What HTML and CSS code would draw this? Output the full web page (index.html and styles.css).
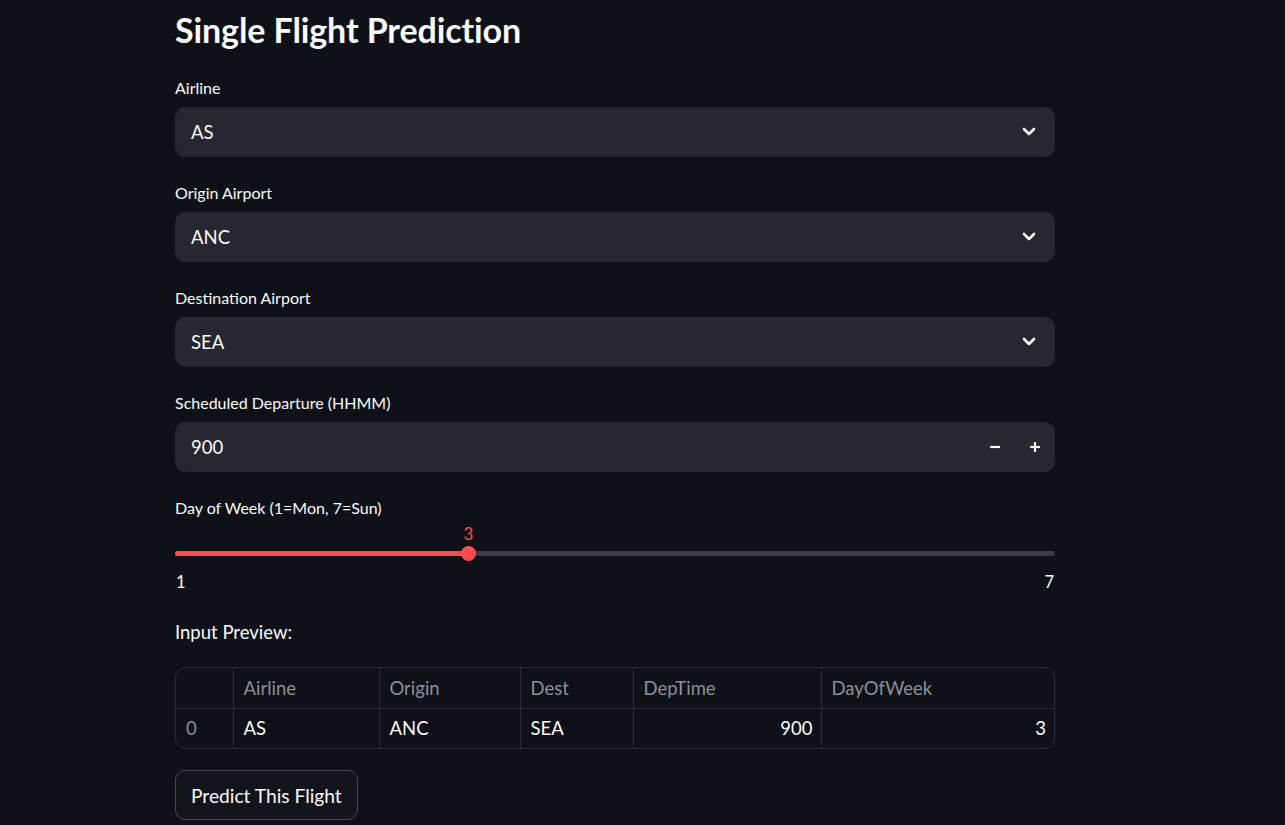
FILE: index.html
```html
<!DOCTYPE html>
<html lang="en">
<head>
<meta charset="utf-8">
<title>Single Flight Prediction</title>
<link rel="stylesheet" href="styles.css">
</head>
<body>
<main class="main">
  <h2 class="title">Single Flight Prediction</h2>

  <div class="widget">
    <label class="label">Airline</label>
    <div class="control select">
      <span class="value">AS</span>
      <svg class="chevron" viewBox="0 0 14 10" width="14" height="10"><polyline points="2,2 7,7 12,2" fill="none" stroke="#fafafa" stroke-width="2.6" stroke-linecap="round" stroke-linejoin="round"/></svg>
    </div>
  </div>

  <div class="widget">
    <label class="label">Origin Airport</label>
    <div class="control select">
      <span class="value">ANC</span>
      <svg class="chevron" viewBox="0 0 14 10" width="14" height="10"><polyline points="2,2 7,7 12,2" fill="none" stroke="#fafafa" stroke-width="2.6" stroke-linecap="round" stroke-linejoin="round"/></svg>
    </div>
  </div>

  <div class="widget">
    <label class="label">Destination Airport</label>
    <div class="control select">
      <span class="value">SEA</span>
      <svg class="chevron" viewBox="0 0 14 10" width="14" height="10"><polyline points="2,2 7,7 12,2" fill="none" stroke="#fafafa" stroke-width="2.6" stroke-linecap="round" stroke-linejoin="round"/></svg>
    </div>
  </div>

  <div class="widget">
    <label class="label">Scheduled Departure (HHMM)</label>
    <div class="control number">
      <span class="value">900</span>
      <div class="steppers">
        <span class="step"><svg viewBox="0 0 12 12" width="12" height="12"><line x1="1" y1="6" x2="11" y2="6" stroke="#fafafa" stroke-width="2.2"/></svg></span>
        <span class="step"><svg viewBox="0 0 12 12" width="12" height="12"><line x1="1" y1="6" x2="11" y2="6" stroke="#fafafa" stroke-width="2.2"/><line x1="6" y1="1" x2="6" y2="11" stroke="#fafafa" stroke-width="2.2"/></svg></span>
      </div>
    </div>
  </div>

  <div class="widget slider-widget">
    <label class="label">Day of Week (1=Mon, 7=Sun)</label>
    <div class="slider">
      <div class="track">
        <div class="fill" style="width: 33.333%"></div>
        <div class="thumb" style="left: 33.333%"><span class="thumb-value">3</span></div>
      </div>
      <div class="ticks"><span>1</span><span>7</span></div>
    </div>
  </div>

  <p class="preview">Input Preview:</p>

  <div class="table-wrap">
    <table class="grid">
      <colgroup>
        <col style="width:57px"><col style="width:146px"><col style="width:141px"><col style="width:113px"><col style="width:188px"><col>
      </colgroup>
      <thead>
        <tr><th></th><th>Airline</th><th>Origin</th><th>Dest</th><th>DepTime</th><th>DayOfWeek</th></tr>
      </thead>
      <tbody>
        <tr><td class="idx">0</td><td>AS</td><td>ANC</td><td>SEA</td><td class="num">900</td><td class="num">3</td></tr>
      </tbody>
    </table>
  </div>

  <button class="btn" type="button">Predict This Flight</button>
</main>
</body>
</html>
```

FILE: styles.css
```css
* { box-sizing: border-box; }

html, body {
  margin: 0;
  padding: 0;
  background: #0e1117;
  color: #fafafa;
  font-family: Lato, "Noto Sans", sans-serif;
  overflow: hidden;
}

.main {
  width: 880px;
  margin-left: 175px;
  display: flex;
  flex-direction: column;
}

.title {
  margin: 0;
  font-size: 34px;
  font-weight: 700;
  line-height: 44px;
  padding-top: 8px;
  margin-bottom: 21px;
  letter-spacing: -0.1px;
}

.widget {
  display: flex;
  flex-direction: column;
  margin-bottom: 21px;
}

.label {
  font-size: 16px;
  line-height: 29px;
  height: 29px;
  margin-bottom: 5px;
  color: #fafafa;
}

.control {
  height: 50px;
  background: #262730;
  border-radius: 10px;
  display: flex;
  align-items: center;
  padding-left: 16px;
}

.value {
  font-size: 18.5px;
  flex: 1;
}

.select { padding-right: 19px; }

.chevron { display: block; }

.number { padding-right: 0; }

.steppers {
  display: flex;
  height: 100%;
}

.step {
  width: 40px;
  height: 100%;
  display: flex;
  align-items: center;
  justify-content: center;
}

.step svg { display: block; }

.slider-widget { margin-bottom: 0; }

.slider {
  padding-top: 24px;
}

.track {
  position: relative;
  height: 5px;
  border-radius: 3px;
  background: #3b3d44;
}

.fill {
  height: 100%;
  border-radius: 3px;
  background: #ff4b4b;
}

.thumb {
  position: absolute;
  top: 50%;
  width: 15px;
  height: 15px;
  margin-left: -7.5px;
  margin-top: -7.5px;
  border-radius: 50%;
  background: #ff4b4b;
}

.thumb-value {
  position: absolute;
  bottom: 17px;
  left: 50%;
  transform: translateX(-50%);
  font-size: 17px;
  line-height: 20px;
  color: #ff4b4b;
}

.ticks {
  display: flex;
  justify-content: space-between;
  font-size: 16.5px;
  line-height: 24px;
  margin-top: 14px;
  padding: 0 1px;
}

.preview {
  margin: 23px 0 0;
  font-size: 18.5px;
  line-height: 30px;
  height: 30px;
}

.table-wrap {
  margin-top: 20px;
  border: 1px solid #2b2d34;
  border-radius: 10px;
  overflow: hidden;
  width: 880px;
}

.grid {
  width: 100%;
  border-collapse: collapse;
  table-layout: fixed;
  font-size: 18.5px;
}

.grid th, .grid td {
  height: 40px;
  padding: 0 10px;
  text-align: left;
  border-right: 1px solid #2b2d34;
  white-space: nowrap;
}

.grid th:last-child, .grid td:last-child { border-right: none; }

.grid th {
  font-weight: 400;
  color: #8d9096;
  border-bottom: 1px solid #2b2d34;
}

.grid td { color: #fafafa; }

.grid td.idx { color: #8d9096; }

.grid td.num { text-align: right; padding-right: 8px; }

.btn {
  align-self: flex-start;
  margin-top: 21px;
  height: 50px;
  padding: 0 15px;
  background: #13151c;
  border: 1px solid #464851;
  border-radius: 10px;
  color: #fafafa;
  font-family: inherit;
  font-size: 19.2px;
}
```
